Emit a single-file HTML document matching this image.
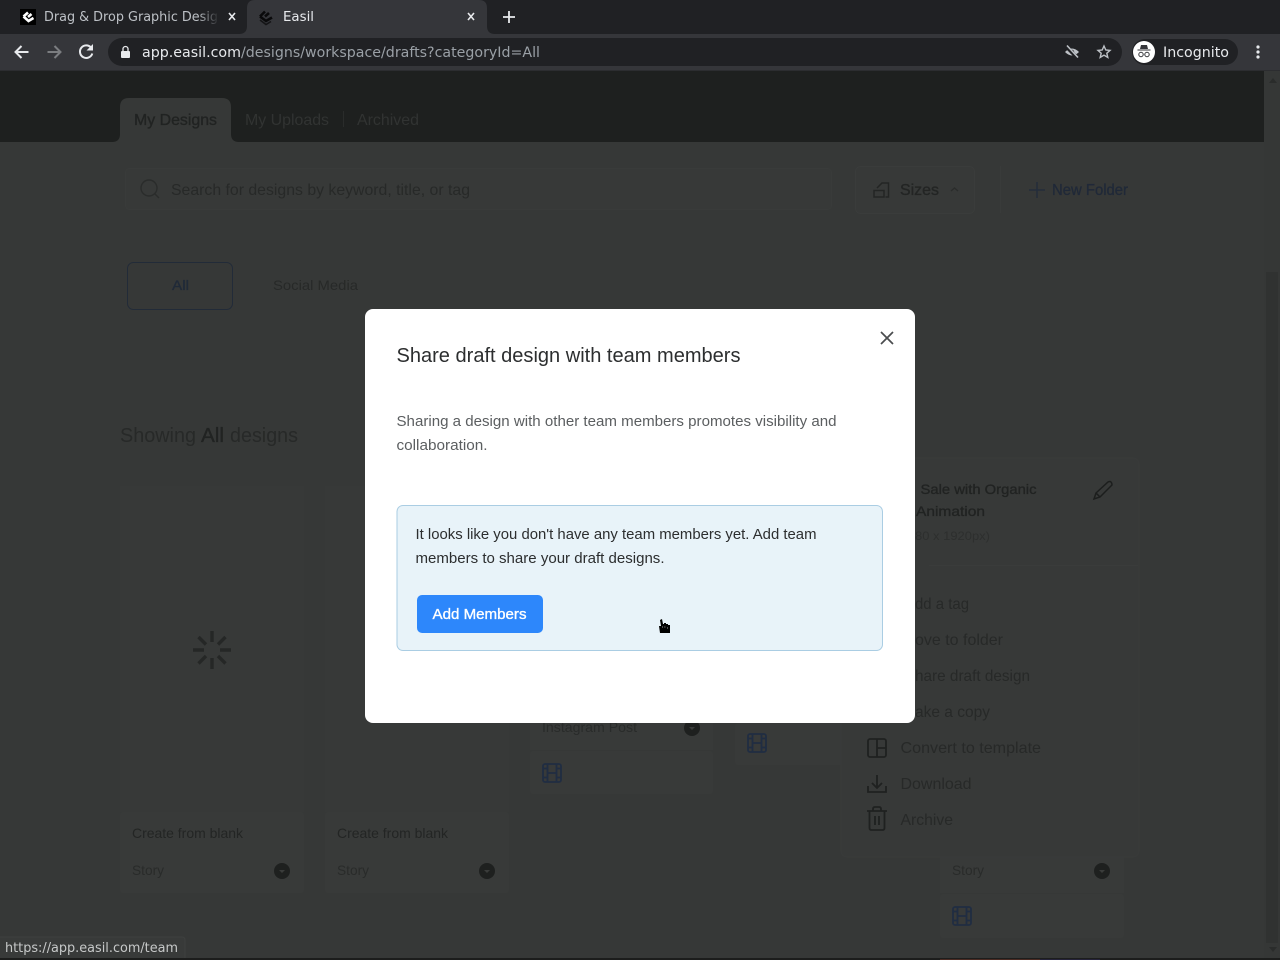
<!DOCTYPE html>
<html lang="en"><head><meta charset="utf-8"><title>Easil</title>
<style>
html,body{margin:0;padding:0;width:1280px;height:960px;overflow:hidden;background:#363837}
svg{display:block;position:absolute;left:0;top:0}
text{white-space:pre}
.r{font-family:"Liberation Sans",sans-serif}
.d{font-family:"DejaVu Sans",sans-serif}
.m{stroke-width:.35}
</style></head><body>
<svg width="1280" height="960" viewBox="0 0 1280 960" xmlns="http://www.w3.org/2000/svg">
<defs><linearGradient id="fade" x1="0" x2="1" y1="0" y2="0"><stop offset="0" stop-color="#202124" stop-opacity="0"/><stop offset="1" stop-color="#202124"/></linearGradient></defs>
<rect width="1280" height="960" fill="#363837"/>
<!-- tab strip -->
<rect width="1280" height="34" fill="#202124"/>
<path d="M239 34q8 0 8-8V8q0-8 8-8h224q8 0 8 8v18q0 8 8 8z" fill="#35363a"/>
<rect x="20" y="9" width="16" height="16" fill="#000"/>
<path d="M23.500 16.500l4.500-4M23.500 16.500l5 4.500 5-3M28 17l3.500-3" stroke="#fff" stroke-width="2.600" fill="none"/>
<text class="d" x="44" y="21" font-size="13" fill="#bdc1c6" textLength="174" lengthAdjust="spacingAndGlyphs">Drag &amp; Drop Graphic Desig</text>
<rect x="198" y="8" width="21" height="18" fill="url(#fade)"/>
<path d="M229 13l6 7m0-7l-6 7" stroke="#e8eaed" stroke-width="1.600" fill="none"/>
<path d="M260 16.500l5-5M260 16.500l6 4.500 6-3.500M265 16.500l4-3.500" stroke="#0a0a0b" stroke-width="2.600" fill="none"/><path d="M260 20l6 4.500 5-3" stroke="#141416" stroke-width="1.600" fill="none"/>
<text class="d" x="283" y="21" font-size="13" fill="#e8eaed" textLength="31" lengthAdjust="spacingAndGlyphs">Easil</text>
<path d="M468 13l6 7m0-7l-6 7" stroke="#e8eaed" stroke-width="1.600" fill="none"/>
<path d="M509 11v12M503 17h12" stroke="#e8eaed" stroke-width="1.800" fill="none"/>
<!-- toolbar -->
<rect x="0" y="34" width="1280" height="37" fill="#35363a"/>
<rect x="0" y="70" width="1280" height="1" fill="#2c2d30"/>
<path d="M28.500 52H16M21.500 46l-6 6 6 6" stroke="#e8eaed" stroke-width="2" fill="none"/>
<path d="M47.500 52H60M54.500 46l6 6-6 6" stroke="#7b7d80" stroke-width="2" fill="none"/>
<path d="M91 47.500a6.300 6.300 0 1 0 1.300 6" stroke="#e8eaed" stroke-width="2" fill="none"/><path d="M93 44v6.500h-6.500z" fill="#e8eaed"/>
<rect x="108" y="38" width="1014" height="28" rx="14" fill="#202124"/>
<rect x="121" y="51" width="9" height="7" rx="1" fill="#e8eaed"/><path d="M123 51v-2a2.500 2.500 0 0 1 5 0v2" stroke="#e8eaed" stroke-width="1.300" fill="none"/>
<text class="d" x="142" y="57" font-size="14" fill="#e8eaed" textLength="99" lengthAdjust="spacingAndGlyphs">app.easil.com</text>
<text class="d" x="241" y="57" font-size="14" fill="#9aa0a6" textLength="299" lengthAdjust="spacingAndGlyphs">/designs/workspace/drafts?categoryId=All</text>
<path d="M1065 52q7-7 14 0q-7 7-14 0z" fill="#bdc1c6"/><circle cx="1072" cy="52" r="2.200" fill="#202124"/><path d="M1066 46.500l11 11" stroke="#202124" stroke-width="3.500"/><path d="M1067 45.500l11 12" stroke="#bdc1c6" stroke-width="1.600"/>
<path d="M1104 46l1.800 4 4.200.4-3.200 2.800 1 4.200-3.800-2.200-3.800 2.200 1-4.200-3.200-2.800 4.200-.4z" fill="none" stroke="#bdc1c6" stroke-width="1.400"/>
<rect x="1132" y="39" width="106" height="26" rx="13" fill="#202124"/>
<circle cx="1144" cy="52" r="11" fill="#fff"/>
<path d="M1140 49l1-4h6l1 4zM1137.500 49.500h13v1h-13z" fill="#35363a"/><circle cx="1141" cy="54.500" r="2.200" fill="none" stroke="#35363a"/><circle cx="1147" cy="54.500" r="2.200" fill="none" stroke="#35363a"/>
<text class="d" x="1163" y="57" font-size="14" fill="#e8eaed" textLength="66" lengthAdjust="spacingAndGlyphs">Incognito</text>
<circle cx="1258" cy="47" r="1.600" fill="#e8eaed"/><circle cx="1258" cy="52" r="1.600" fill="#e8eaed"/><circle cx="1258" cy="57" r="1.600" fill="#e8eaed"/>
<!-- dark header -->
<rect x="0" y="71" width="1264" height="71" fill="#1e201f"/>
<path d="M112 142q8 0 8-8v-27q0-9 9-9h93q9 0 9 9v27q0 8 8 8z" fill="#363837"/>
<text class="r m" x="134" y="125" font-size="16" fill="#212322" stroke="#212322" textLength="83" lengthAdjust="spacingAndGlyphs">My Designs</text>
<text class="r" x="245" y="125" font-size="16" fill="#313332" textLength="84" lengthAdjust="spacingAndGlyphs">My Uploads</text>
<rect x="343" y="111" width="1" height="16" fill="#2a2c2b"/>
<text class="r" x="357" y="125" font-size="16" fill="#313332" textLength="62" lengthAdjust="spacingAndGlyphs">Archived</text>
<!-- scrollbar -->
<rect x="1264" y="71" width="16" height="887" fill="#353736"/>
<rect x="1266" y="272" width="12" height="671" fill="#303231"/>
<path d="M1269 83l4-5 4 5z" fill="#2a2c2b"/>
<path d="M1269 947l4 5 4-5z" fill="#2a2c2b"/>
<!-- search row -->
<rect x="125.500" y="168.500" width="706" height="41" rx="4" fill="#373938" stroke="#393b3a"/>
<circle cx="149" cy="188" r="8" fill="none" stroke="#2a2c2b" stroke-width="1.400"/><path d="M155 194l4 4" stroke="#2a2c2b" stroke-width="1.400"/>
<text class="r" x="171" y="195" font-size="16" fill="#272928" textLength="299" lengthAdjust="spacingAndGlyphs">Search for designs by keyword, title, or tag</text>
<rect x="855.500" y="166.500" width="119" height="47" rx="5" fill="#373938" stroke="#3a3c3b"/>
<path d="M877 188l5-5h6.500v14h-3" fill="none" stroke="#232524" stroke-width="1.500"/><rect x="874" y="190.500" width="10" height="6.500" fill="none" stroke="#232524" stroke-width="1.500"/>
<text class="r m" x="900" y="195" font-size="16" fill="#232524" stroke="#232524" textLength="39" lengthAdjust="spacingAndGlyphs">Sizes</text>
<path d="M951 191l3.500-3 3.500 3" fill="none" stroke="#2a2c2b" stroke-width="1.300"/>
<rect x="1000" y="166" width="1" height="47" fill="#393b3a"/>
<path d="M1037 182v16M1029 190h16" stroke="#232c3a" stroke-width="1.500"/>
<text class="r m" x="1052" y="195" font-size="16" fill="#202938" stroke="#202938" textLength="76" lengthAdjust="spacingAndGlyphs">New Folder</text>
<!-- category chips -->
<rect x="127.500" y="262.500" width="105" height="47" rx="6" fill="none" stroke="#222b38"/>
<text class="r m" x="172" y="290" font-size="14" fill="#202a38" stroke="#202a38" textLength="17" lengthAdjust="spacingAndGlyphs">All</text>
<text class="r" x="273" y="290" font-size="14" fill="#272928" textLength="85" lengthAdjust="spacingAndGlyphs">Social Media</text>
<!-- heading -->
<text class="r" x="120" y="442" font-size="20" fill="#272928" textLength="76" lengthAdjust="spacingAndGlyphs">Showing</text>
<text class="r m" x="201" y="442" font-size="20" fill="#212322" stroke="#212322" textLength="23" lengthAdjust="spacingAndGlyphs">All</text>
<text class="r" x="230" y="442" font-size="20" fill="#272928" textLength="68" lengthAdjust="spacingAndGlyphs">designs</text>
<!-- cards -->
<rect x="120" y="486" width="184" height="326" fill="#373938"/>
<rect x="120" y="812" width="184" height="81" rx="3" fill="#383a39"/>
<rect x="325" y="486" width="184" height="326" fill="#373938"/>
<rect x="325" y="812" width="184" height="81" rx="3" fill="#383a39"/>
<g stroke="#252726" stroke-width="3.400">
<path d="M212 631v11M212 658v11M193 650h11M220 650h11M198.500 637l7.500 7.500M218 656l7.500 7.500M225.500 637l-7.500 7.500M206 656l-7.500 7.500"/>
</g>
<text class="r" x="132" y="838" font-size="14" fill="#232524" textLength="111" lengthAdjust="spacingAndGlyphs">Create from blank</text>
<text class="r" x="132" y="875" font-size="14" fill="#292b2a" textLength="32" lengthAdjust="spacingAndGlyphs">Story</text>
<circle cx="282" cy="871" r="8" fill="#1e201f"/><path d="M279 870l3 3 3-3z" fill="#3a3c3b"/>
<text class="r" x="337" y="838" font-size="14" fill="#232524" textLength="111" lengthAdjust="spacingAndGlyphs">Create from blank</text>
<text class="r" x="337" y="875" font-size="14" fill="#292b2a" textLength="32" lengthAdjust="spacingAndGlyphs">Story</text>
<circle cx="487" cy="871" r="8" fill="#1e201f"/><path d="M484 870l3 3 3-3z" fill="#3a3c3b"/>
<!-- third card -->
<rect x="530" y="700" width="183" height="50" fill="#383a39"/>
<rect x="530" y="751" width="183" height="43" rx="3" fill="#383a39"/>
<text class="r" x="542" y="732" font-size="14" fill="#292b2a" textLength="95" lengthAdjust="spacingAndGlyphs">Instagram Post</text>
<circle cx="692" cy="728" r="8" fill="#1e201f"/><path d="M689 727l3 3 3-3z" fill="#3a3c3b"/>
<g fill="none" stroke="#202d42" stroke-width="1.800"><rect x="543" y="764" width="18" height="18" rx="2"/><path d="M547.500 764v18M556.500 764v18M547.500 773h9M543 768.500h4.500M543 777.500h4.500M556.500 768.500H561M556.500 777.500H561"/></g>
<!-- fourth card -->
<rect x="735" y="723" width="110" height="42" rx="3" fill="#383a39"/>
<g fill="none" stroke="#202d42" stroke-width="1.800"><rect x="748" y="734" width="18" height="18" rx="2"/><path d="M752.500 734v18M761.500 734v18M752.500 743h9M748 738.500h4.500M748 747.500h4.500M761.500 738.500H766M761.500 747.500H766"/></g>
<!-- last card -->
<rect x="940" y="850" width="184" height="43" fill="#383a39"/>
<rect x="940" y="894" width="184" height="44" rx="3" fill="#383a39"/>
<text class="r" x="952" y="875" font-size="14" fill="#292b2a" textLength="32" lengthAdjust="spacingAndGlyphs">Story</text>
<circle cx="1102" cy="871" r="8" fill="#1e201f"/><path d="M1099 870l3 3 3-3z" fill="#3a3c3b"/>
<g fill="none" stroke="#202d42" stroke-width="1.800"><rect x="953" y="907" width="18" height="18" rx="2"/><path d="M957.500 907v18M966.500 907v18M957.500 916h9M953 911.500h4.500M953 920.500h4.500M966.500 911.500H971M966.500 920.500H971"/></g>
<!-- menu panel -->
<rect x="841" y="458" width="298" height="399" rx="6" fill="#373938" stroke="#393b3a"/>
<rect x="929" y="565" width="209" height="1" fill="#3a3c3b"/>
<text class="r m" x="920.500" y="494" font-size="14" fill="#212322" stroke="#212322" textLength="116" lengthAdjust="spacingAndGlyphs">Sale with Organic</text>
<text class="r m" x="916" y="516" font-size="14" fill="#212322" stroke="#212322" textLength="69" lengthAdjust="spacingAndGlyphs">Animation</text>
<text class="r" x="915" y="540" font-size="12" fill="#2d2f2e" textLength="75" lengthAdjust="spacingAndGlyphs">80 x 1920px)</text>
<path d="M1094 499l2-6 12-11q2-1 3 0t1 3l-12 12zM1096 493l4 4" fill="none" stroke="#1c1e1d" stroke-width="1.500"/>
<g class="r" font-size="16" fill="#272928">
<text x="915" y="609" textLength="54" lengthAdjust="spacingAndGlyphs">dd a tag</text>
<text x="915" y="645" textLength="88" lengthAdjust="spacingAndGlyphs">ove to folder</text>
<text x="915" y="681" textLength="115" lengthAdjust="spacingAndGlyphs">hare draft design</text>
<text x="915" y="717" textLength="75" lengthAdjust="spacingAndGlyphs">ake a copy</text>
<text x="900.500" y="753" textLength="140.500" lengthAdjust="spacingAndGlyphs">Convert to template</text>
<text x="900.500" y="789" textLength="71" lengthAdjust="spacingAndGlyphs">Download</text>
<text x="900.500" y="825" textLength="52.500" lengthAdjust="spacingAndGlyphs">Archive</text>
</g>
<g fill="none" stroke="#1f2120" stroke-width="1.800">
<rect x="868" y="739" width="18" height="18" rx="2"/><path d="M877 739v18M877 748h9"/>
<path d="M868 786v6h18v-6M877 775v13M872 783l5 5 5-5"/>
<path d="M867 811h20M873 811v-2q0-2 2-2h4q2 0 2 2v2M869.500 811v17q0 2 2 2h11q2 0 2-2v-17M875 816v9M879 816v9"/>
</g>
<!-- status bubble -->
<path d="M0 937h182q3 0 3 3v18H0z" fill="#383a39"/>
<path d="M0 937h182q3 0 3 3v18" fill="none" stroke="#3e403f"/>
<text class="d" x="5" y="952" font-size="13" fill="#c6c8c8" textLength="173" lengthAdjust="spacingAndGlyphs">https://app.easil.com/team</text>
<!-- bottom edge -->
<rect x="0" y="958" width="1280" height="2" fill="#1c1d1c"/>
<rect x="940" y="959" width="100" height="1" fill="#4a2a22"/>
<rect x="1040" y="959" width="60" height="1" fill="#25233a"/>
<!-- modal -->
<rect x="365" y="309" width="550" height="414" rx="8" fill="#fff"/>
<text class="r" x="396.500" y="362" font-size="20" fill="#2c2e2f" textLength="344" lengthAdjust="spacingAndGlyphs">Share draft design with team members</text>
<path d="M881 332l12 12m0-12l-12 12" stroke="#4a4c4e" stroke-width="1.700" fill="none"/>
<text class="r" x="396.500" y="426" font-size="15" fill="#5b5e60" textLength="440" lengthAdjust="spacingAndGlyphs">Sharing a design with other team members promotes visibility and</text>
<text class="r" x="396.500" y="450" font-size="15" fill="#5b5e60" textLength="91" lengthAdjust="spacingAndGlyphs">collaboration.</text>
<rect x="397" y="505.500" width="485.500" height="145" rx="6" fill="#e8f3f9" stroke="#aacde3"/>
<text class="r" x="415.500" y="539" font-size="15" fill="#2c2e2f" textLength="401" lengthAdjust="spacingAndGlyphs">It looks like you don't have any team members yet. Add team</text>
<text class="r" x="415.500" y="563" font-size="15" fill="#2c2e2f" textLength="249" lengthAdjust="spacingAndGlyphs">members to share your draft designs.</text>
<rect x="417" y="595" width="126" height="38" rx="5" fill="#2d87fb"/>
<text class="r m" x="432.500" y="619" font-size="15" fill="#fff" stroke="#fff" textLength="94" lengthAdjust="spacingAndGlyphs">Add Members</text>
<!-- cursor -->
<path d="M660 620l2-1 1 5h1v-1h2v1h2v1h2v8h-10l-1-7h2z" fill="#000"/>
<path d="M662 627h.8M664.500 627h.8M667 628h.8" stroke="#fff" stroke-width=".7"/>
</svg>
</body></html>
